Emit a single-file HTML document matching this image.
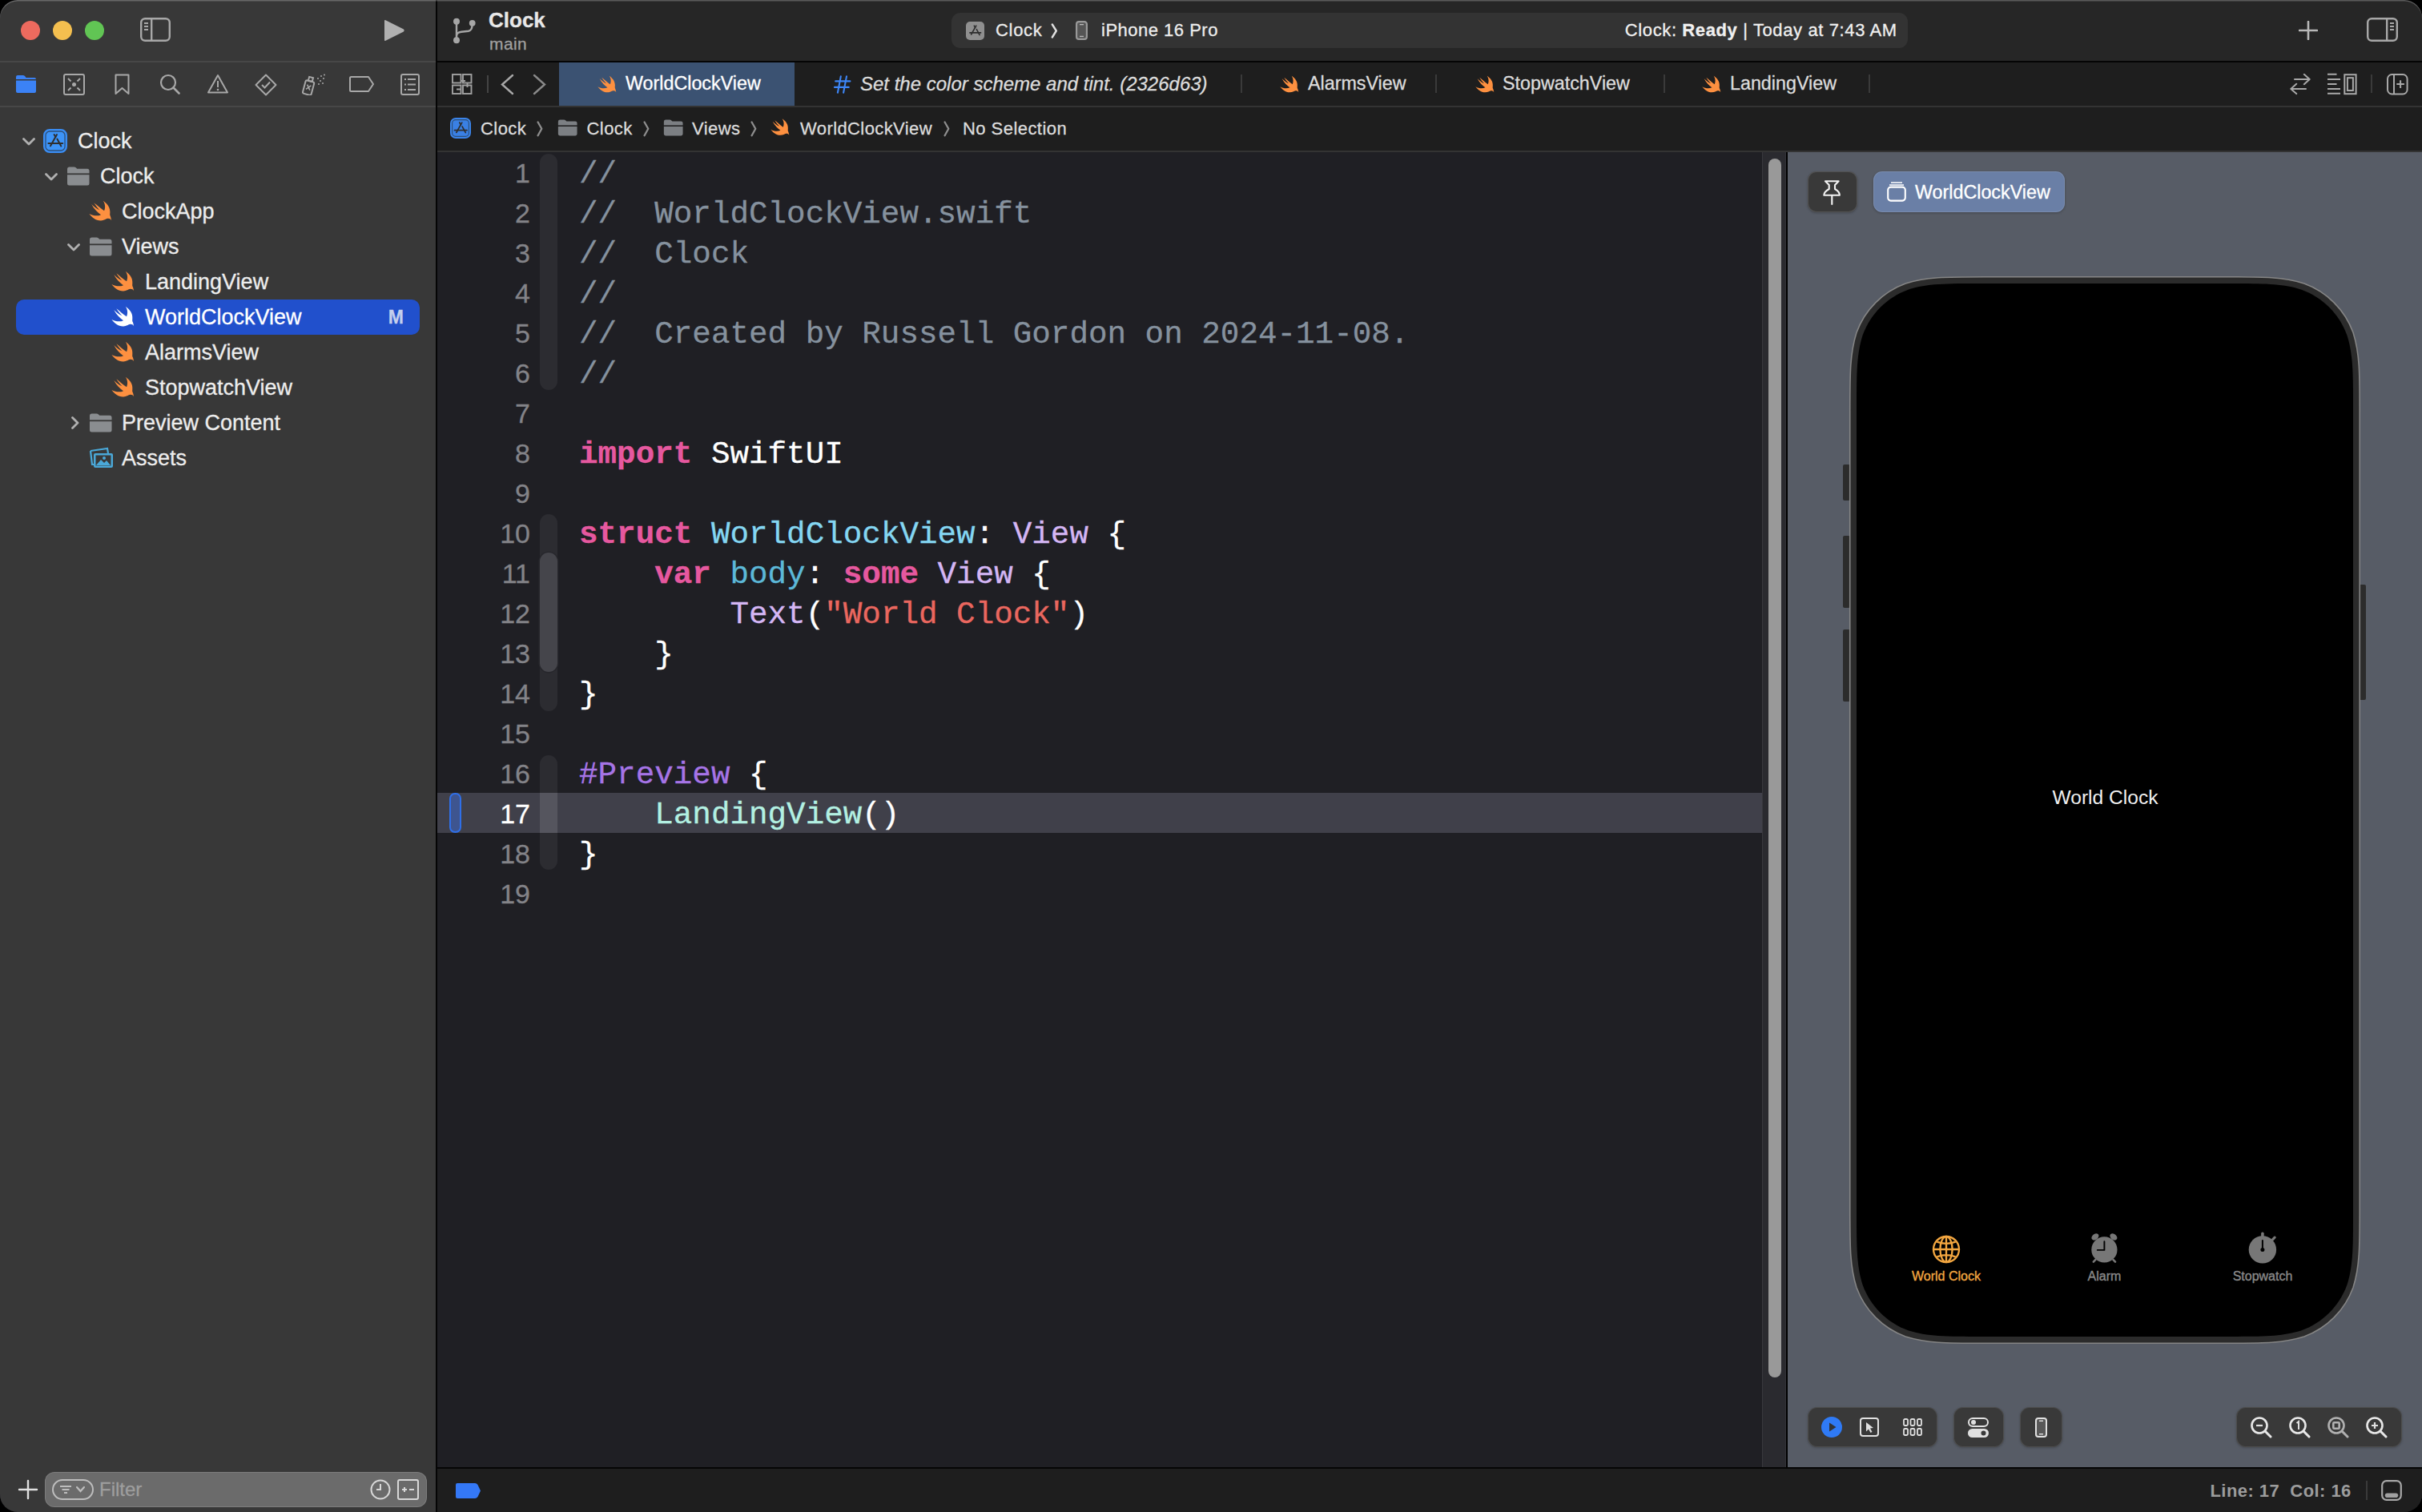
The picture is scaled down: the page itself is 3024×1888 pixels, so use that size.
<!DOCTYPE html><html><head><meta charset="utf-8"><style>
html,body{margin:0;padding:0;background:#000;width:3024px;height:1888px;overflow:hidden;}
.win{position:absolute;left:0;top:0;width:3024px;height:1888px;border-radius:22px;overflow:hidden;background:#1f1f24;}
.t{position:absolute;white-space:pre;line-height:1;-webkit-text-stroke-width:0.3px;}
.r{position:absolute;display:block;}
</style></head><body><div class="win">
<div class="r" style="left:0px;top:0px;width:544px;height:1888px;background:#383838;"></div>
<div class="r" style="left:544px;top:0px;width:2px;height:1888px;background:#050505;"></div>
<div class="r" style="left:0px;top:76px;width:544px;height:2px;background:#474747;"></div>
<div class="r" style="left:0px;top:132px;width:544px;height:2px;background:#474747;"></div>
<div class="r" style="left:26px;top:26px;width:24px;height:24px;background:#ed6a5e;border-radius:50%;"></div>
<div class="r" style="left:66px;top:26px;width:24px;height:24px;background:#f4bf4f;border-radius:50%;"></div>
<div class="r" style="left:106px;top:26px;width:24px;height:24px;background:#61c554;border-radius:50%;"></div>
<svg class="r" style="left:175px;top:22px;" width="38" height="30" viewBox="0 0 38 30"><rect x="1.2" y="1.2" width="35.6" height="27.6" rx="5" fill="none" stroke="#a8a8a8" stroke-width="2.4"/><rect x="13" y="1.2" width="2.4" height="27.6" fill="#a8a8a8"/><g fill="#a8a8a8"><rect x="5" y="6" width="5" height="2"/><rect x="5" y="10" width="5" height="2"/><rect x="5" y="14" width="5" height="2"/></g></svg>
<svg class="r" style="left:478px;top:24px;" width="28" height="28" viewBox="0 0 28 28"><path d="M2,2 Q2,0.5 3.5,1.3 L26,12.5 Q27.5,14 26,15.5 L3.5,26.7 Q2,27.5 2,26 Z" fill="#b0b0b0"/></svg>
<div class="r" style="left:546px;top:0px;width:2478px;height:76px;background:#262626;"></div>
<div class="r" style="left:546px;top:76px;width:2478px;height:2px;background:#050505;"></div>
<svg class="r" style="left:565px;top:22px;" width="30" height="33" viewBox="0 0 30 33"><g fill="#a6a6a6"><circle cx="5" cy="4.8" r="4"/><circle cx="5" cy="28.2" r="4"/><circle cx="24.7" cy="6.8" r="3.9"/></g><path d="M5,5 L5,28 M5,23 Q5,18.5 11,17.8 L20,16.8 Q24.2,16 24.5,10" fill="none" stroke="#a6a6a6" stroke-width="2.4"/></svg>
<div class="t" style="top:11.99px;font-size:26px;color:#e8e8e8;font-family:'Liberation Sans', sans-serif;font-weight:700;left:610.00px;">Clock</div>
<div class="t" style="top:43.92px;font-size:21px;color:#a0a0a0;font-family:'Liberation Sans', sans-serif;letter-spacing:0.4px;left:611.00px;">main</div>
<div class="r" style="left:1188px;top:16px;width:1194px;height:44px;background:#333333;border-radius:11px;"></div>
<svg class="r" style="left:1206px;top:27px;" width="23" height="23" viewBox="0 0 23 23"><rect x="0" y="0" width="23" height="23" rx="5" fill="#8f8f8f"/><g stroke="#2e2e2e" stroke-width="1.6" stroke-linecap="round" fill="none"><path d="M12.8,5.2 L6.6,16"/><path d="M10.3,5.2 L11.6,7.5"/><path d="M13.3,9.7 L17.1,16.6"/><path d="M4.9,13.9 L18.6,13.9"/></g></svg>
<div class="t" style="top:27.17px;font-size:22px;color:#ececec;font-family:'Liberation Sans', sans-serif;letter-spacing:0.7px;left:1243.00px;">Clock</div>
<svg class="r" style="left:1312px;top:29px;" width="9" height="19" viewBox="0 0 9 19"><path d="M1.8,1.5 L6.8,9.5 L1.8,17.5" fill="none" stroke="#e0e0e0" stroke-width="2.4" stroke-linecap="round" stroke-linejoin="round"/></svg>
<svg class="r" style="left:1343px;top:26px;" width="15" height="24" viewBox="0 0 15 24"><rect x="1.1" y="1.1" width="12.8" height="21.8" rx="3" fill="#555" stroke="#999" stroke-width="2.2"/><rect x="5" y="4" width="5" height="1.3" fill="#bbb"/><rect x="5" y="18.8" width="5" height="1.3" fill="#bbb"/></svg>
<div class="t" style="top:27.17px;font-size:22px;color:#ececec;font-family:'Liberation Sans', sans-serif;letter-spacing:0.5px;left:1375.00px;">iPhone 16 Pro</div>
<div class="t" style="top:27.17px;font-size:22px;color:#f0f0f0;font-family:'Liberation Sans', sans-serif;letter-spacing:0.62px;right:655.20px;">Clock: <b>Ready</b> | Today at 7:43 AM</div>
<svg class="r" style="left:2870px;top:26px;" width="24" height="24" viewBox="0 0 24 24"><path d="M12,1 L12,23 M1,12 L23,12" stroke="#b8b8b8" stroke-width="2.6" stroke-linecap="round"/></svg>
<svg class="r" style="left:2955px;top:22px;" width="39" height="30" viewBox="0 0 39 30"><rect x="1.2" y="1.2" width="36.6" height="27.6" rx="5" fill="none" stroke="#a8a8a8" stroke-width="2.4"/><rect x="24" y="1.2" width="2.4" height="27.6" fill="#a8a8a8"/><g fill="#a8a8a8"><rect x="29" y="6" width="5" height="2"/><rect x="29" y="10" width="5" height="2"/><rect x="29" y="14" width="5" height="2"/></g></svg>
<div class="r" style="left:546px;top:78px;width:2478px;height:54px;background:#1e1e1e;"></div>
<div class="r" style="left:546px;top:132px;width:2478px;height:2px;background:#333333;"></div>
<div class="r" style="left:698px;top:78px;width:294px;height:54px;background:#3b5272;"></div>
<svg class="r" style="left:563px;top:92px;" width="27" height="26" viewBox="0 0 27 26"><g fill="none" stroke="#a0a0a0" stroke-width="1.9"><rect x="2" y="1" width="10.5" height="10.5"/><rect x="15" y="1" width="10.5" height="10.5"/><rect x="2" y="14.5" width="10.5" height="10.5"/><rect x="15" y="14.5" width="10.5" height="10.5"/><path d="M12.5,9 L18,9 M20.5,11.5 L20.5,17 M7,19.5 L13,19.5"/></g></svg>
<div class="r" style="left:608px;top:94px;width:2px;height:22px;background:#444;"></div>
<svg class="r" style="left:624px;top:92px;" width="18" height="27" viewBox="0 0 18 27"><path d="M16,2 L3,13.5 L16,25" fill="none" stroke="#a8a8a8" stroke-width="2.4" stroke-linecap="round"/></svg>
<svg class="r" style="left:665px;top:92px;" width="18" height="27" viewBox="0 0 18 27"><path d="M2,2 L15,13.5 L2,25" fill="none" stroke="#8a8a8a" stroke-width="2.4" stroke-linecap="round"/></svg>
<svg class="r" style="left:746px;top:94px;" width="24" height="22" viewBox="0 0 29.5 26.5"><path d="M18.1,0.8 C23.5,4.5 27.5,9.5 26.8,16.5 C26.5,18.5 26.8,19.5 27.5,21 L28.7,25.7 C27.5,24 26,23.2 24,23.3 C21.5,23.6 19.5,26 15,25.9 C8.5,25.8 3.5,21.5 0.4,17.2 C5.5,20 11,20.5 15.3,18.5 C11,15.5 6.5,11 3.3,5.0 C6.5,8 10,11 13.6,12.4 C11,10 8.5,6.5 6.5,3.2 C10.5,6.5 15,10.5 19.4,13.5 C21,10 21,5 18.1,0.8 Z" fill="#fd9040"/></svg>
<div class="t" style="top:93.27px;font-size:23.3px;color:#ffffff;font-family:'Liberation Sans', sans-serif;left:781.00px;">WorldClockView</div>
<svg class="r" style="left:1040px;top:93px;" width="24" height="26" viewBox="0 0 24 26"><path d="M9.8,2.4 L5.9,22.7 M17,2.4 L13.1,22.7 M3.2,8.4 L21.4,8.4 M2,15.9 L19.7,15.9" stroke="#3d86f7" stroke-width="2.1" stroke-linecap="round"/></svg>
<div class="t" style="top:92.68px;font-size:24px;color:#dcdcdc;font-family:'Liberation Sans', sans-serif;font-style:italic;left:1074.00px;">Set the color scheme and tint. (2326d63)</div>
<div class="r" style="left:1549px;top:93px;width:2px;height:23px;background:#3a3a3a;"></div>
<div class="r" style="left:1792px;top:93px;width:2px;height:23px;background:#3a3a3a;"></div>
<div class="r" style="left:2077px;top:93px;width:2px;height:23px;background:#3a3a3a;"></div>
<div class="r" style="left:2333px;top:93px;width:2px;height:23px;background:#3a3a3a;"></div>
<svg class="r" style="left:1598px;top:94px;" width="24" height="22" viewBox="0 0 29.5 26.5"><path d="M18.1,0.8 C23.5,4.5 27.5,9.5 26.8,16.5 C26.5,18.5 26.8,19.5 27.5,21 L28.7,25.7 C27.5,24 26,23.2 24,23.3 C21.5,23.6 19.5,26 15,25.9 C8.5,25.8 3.5,21.5 0.4,17.2 C5.5,20 11,20.5 15.3,18.5 C11,15.5 6.5,11 3.3,5.0 C6.5,8 10,11 13.6,12.4 C11,10 8.5,6.5 6.5,3.2 C10.5,6.5 15,10.5 19.4,13.5 C21,10 21,5 18.1,0.8 Z" fill="#fd9040"/></svg>
<div class="t" style="top:93.27px;font-size:23.3px;color:#dcdcdc;font-family:'Liberation Sans', sans-serif;left:1633.00px;">AlarmsView</div>
<svg class="r" style="left:1842px;top:94px;" width="24" height="22" viewBox="0 0 29.5 26.5"><path d="M18.1,0.8 C23.5,4.5 27.5,9.5 26.8,16.5 C26.5,18.5 26.8,19.5 27.5,21 L28.7,25.7 C27.5,24 26,23.2 24,23.3 C21.5,23.6 19.5,26 15,25.9 C8.5,25.8 3.5,21.5 0.4,17.2 C5.5,20 11,20.5 15.3,18.5 C11,15.5 6.5,11 3.3,5.0 C6.5,8 10,11 13.6,12.4 C11,10 8.5,6.5 6.5,3.2 C10.5,6.5 15,10.5 19.4,13.5 C21,10 21,5 18.1,0.8 Z" fill="#fd9040"/></svg>
<div class="t" style="top:93.27px;font-size:23.3px;color:#dcdcdc;font-family:'Liberation Sans', sans-serif;left:1876.00px;">StopwatchView</div>
<svg class="r" style="left:2125px;top:94px;" width="24" height="22" viewBox="0 0 29.5 26.5"><path d="M18.1,0.8 C23.5,4.5 27.5,9.5 26.8,16.5 C26.5,18.5 26.8,19.5 27.5,21 L28.7,25.7 C27.5,24 26,23.2 24,23.3 C21.5,23.6 19.5,26 15,25.9 C8.5,25.8 3.5,21.5 0.4,17.2 C5.5,20 11,20.5 15.3,18.5 C11,15.5 6.5,11 3.3,5.0 C6.5,8 10,11 13.6,12.4 C11,10 8.5,6.5 6.5,3.2 C10.5,6.5 15,10.5 19.4,13.5 C21,10 21,5 18.1,0.8 Z" fill="#fd9040"/></svg>
<div class="t" style="top:93.27px;font-size:23.3px;color:#dcdcdc;font-family:'Liberation Sans', sans-serif;left:2160.00px;">LandingView</div>
<svg class="r" style="left:2859px;top:92px;" width="27" height="27" viewBox="0 0 27 27"><g fill="none" stroke="#a8a8a8" stroke-width="2" stroke-linecap="round" stroke-linejoin="round"><path d="M6,7 L24.7,7 M17.8,0.8 L24.7,7 L17.8,13.2"/><path d="M1.3,18.9 L20,18.9 M8.2,12.7 L1.3,18.9 L8.2,25.1"/></g></svg>
<svg class="r" style="left:2905px;top:91px;" width="38" height="28" viewBox="0 0 38 28"><g stroke="#a8a8a8" stroke-width="2"><path d="M1,1.8 L12.5,1.8 M1,8 L17,8 M1,13.9 L12.5,13.9 M1,19.9 L17,19.9 M1,25.7 L17,25.7"/></g><rect x="22.3" y="2.2" width="14.3" height="24" fill="none" stroke="#a8a8a8" stroke-width="2"/><rect x="25.9" y="6.2" width="7" height="15.8" fill="none" stroke="#a8a8a8" stroke-width="2"/></svg>
<div class="r" style="left:2960px;top:93px;width:2px;height:23px;background:#3a3a3a;"></div>
<svg class="r" style="left:2980px;top:92px;" width="27" height="27" viewBox="0 0 27 27"><rect x="1" y="1" width="24.6" height="24.5" rx="5.5" fill="none" stroke="#a8a8a8" stroke-width="2"/><rect x="8" y="1" width="2" height="24.5" fill="#a8a8a8"/><path d="M17.1,8.3 L17.1,17.9 M12.3,13.1 L21.9,13.1" stroke="#a8a8a8" stroke-width="2"/></svg>
<div class="r" style="left:546px;top:134px;width:2478px;height:54px;background:#1e1e1e;"></div>
<div class="r" style="left:546px;top:188px;width:2478px;height:2px;background:#333333;"></div>
<svg class="r" style="left:562px;top:147px;" width="26" height="26" viewBox="0 0 26 26"><g transform="scale(0.8666666666666667)"><rect x="1.1" y="1.1" width="27.8" height="27.8" rx="7" fill="#3a80e4" stroke="#3b84ea" stroke-width="2.2"/><rect x="3" y="3" width="24" height="24" rx="5" fill="none" stroke="#2d4f78" stroke-width="1.3"/><g stroke="#2f2f2f" stroke-width="2" stroke-linecap="round" fill="none"><path d="M17,7 L9,21.3"/><path d="M13.6,7 L15.4,10"/><path d="M17.4,12.6 L22.3,21.4"/><path d="M6.4,18.1 L24.2,18.1"/></g></g></svg>
<div class="t" style="top:150.07px;font-size:22px;color:#dcdcdc;font-family:'Liberation Sans', sans-serif;letter-spacing:0.45px;left:600.00px;">Clock</div>
<svg class="r" style="left:670px;top:151px;" width="8" height="20" viewBox="0 0 8 20"><path d="M1.6,1.5 L6.3,9.8 L1.6,18.2" fill="none" stroke="#8e8e8e" stroke-width="2.3" stroke-linecap="round" stroke-linejoin="round"/></svg>
<svg class="r" style="left:803px;top:151px;" width="8" height="20" viewBox="0 0 8 20"><path d="M1.6,1.5 L6.3,9.8 L1.6,18.2" fill="none" stroke="#8e8e8e" stroke-width="2.3" stroke-linecap="round" stroke-linejoin="round"/></svg>
<svg class="r" style="left:937px;top:151px;" width="8" height="20" viewBox="0 0 8 20"><path d="M1.6,1.5 L6.3,9.8 L1.6,18.2" fill="none" stroke="#8e8e8e" stroke-width="2.3" stroke-linecap="round" stroke-linejoin="round"/></svg>
<svg class="r" style="left:1178px;top:151px;" width="8" height="20" viewBox="0 0 8 20"><path d="M1.6,1.5 L6.3,9.8 L1.6,18.2" fill="none" stroke="#8e8e8e" stroke-width="2.3" stroke-linecap="round" stroke-linejoin="round"/></svg>
<svg class="r" style="left:696px;top:149px;" width="25" height="21" viewBox="0 0 29 24"><path d="M1,3.2 Q1,0.5 3.7,0.5 L9.5,0.5 Q11,0.5 12,1.5 L13.2,2.8 L26,2.8 Q28.5,2.8 28.5,5.3 L28.5,21 Q28.5,23.5 26,23.5 L3.5,23.5 Q1,23.5 1,21 Z" fill="#7c7f83"/><rect x="0" y="8.4" width="29" height="1.8" fill="#1e1e1e"/></svg>
<div class="t" style="top:150.07px;font-size:22px;color:#dcdcdc;font-family:'Liberation Sans', sans-serif;letter-spacing:0.45px;left:732.50px;">Clock</div>
<svg class="r" style="left:828px;top:149px;" width="25" height="21" viewBox="0 0 29 24"><path d="M1,3.2 Q1,0.5 3.7,0.5 L9.5,0.5 Q11,0.5 12,1.5 L13.2,2.8 L26,2.8 Q28.5,2.8 28.5,5.3 L28.5,21 Q28.5,23.5 26,23.5 L3.5,23.5 Q1,23.5 1,21 Z" fill="#7c7f83"/><rect x="0" y="8.4" width="29" height="1.8" fill="#1e1e1e"/></svg>
<div class="t" style="top:150.07px;font-size:22px;color:#dcdcdc;font-family:'Liberation Sans', sans-serif;letter-spacing:0.45px;left:864.00px;">Views</div>
<svg class="r" style="left:962px;top:147px;" width="24" height="23" viewBox="0 0 29.5 26.5"><path d="M18.1,0.8 C23.5,4.5 27.5,9.5 26.8,16.5 C26.5,18.5 26.8,19.5 27.5,21 L28.7,25.7 C27.5,24 26,23.2 24,23.3 C21.5,23.6 19.5,26 15,25.9 C8.5,25.8 3.5,21.5 0.4,17.2 C5.5,20 11,20.5 15.3,18.5 C11,15.5 6.5,11 3.3,5.0 C6.5,8 10,11 13.6,12.4 C11,10 8.5,6.5 6.5,3.2 C10.5,6.5 15,10.5 19.4,13.5 C21,10 21,5 18.1,0.8 Z" fill="#fd9040"/></svg>
<div class="t" style="top:150.07px;font-size:22px;color:#dcdcdc;font-family:'Liberation Sans', sans-serif;letter-spacing:0.4px;left:999.00px;">WorldClockView</div>
<div class="t" style="top:150.07px;font-size:22px;color:#dcdcdc;font-family:'Liberation Sans', sans-serif;letter-spacing:0.45px;left:1202.00px;">No Selection</div>
<svg class="r" style="left:19px;top:93px;" width="27" height="23" viewBox="0 0 27 23"><path d="M1,3 Q1,1 3,1 L10,1 Q11.5,1 12.5,2.5 L13.5,4 L24,4 Q26,4 26,6 L26,21 Q26,23 24,23 L3,23 Q1,23 1,21 Z" fill="#3b82f6"/><rect x="1" y="6" width="25" height="1.5" fill="#383838"/></svg>
<svg class="r" style="left:79px;top:92px;" width="27" height="27" viewBox="0 0 27 27"><rect x="1" y="1" width="25" height="25" rx="2" fill="none" stroke="#a8a8a8" stroke-width="2"/><circle cx="13.5" cy="13.5" r="2.5" fill="#a8a8a8"/><path d="M6,6 L9.5,9.5 M21,6 L17.5,9.5 M6,21 L9.5,17.5 M21,21 L17.5,17.5" stroke="#a8a8a8" stroke-width="2"/></svg>
<svg class="r" style="left:143px;top:92px;" width="19" height="27" viewBox="0 0 19 27"><path d="M1.5,1.5 L17.5,1.5 L17.5,25 L9.5,18 L1.5,25 Z" fill="none" stroke="#a8a8a8" stroke-width="2" stroke-linejoin="round"/></svg>
<svg class="r" style="left:199px;top:92px;" width="26" height="26" viewBox="0 0 26 26"><circle cx="11" cy="11" r="9" fill="none" stroke="#a8a8a8" stroke-width="2.2"/><path d="M17.5,17.5 L24.5,24.5" stroke="#a8a8a8" stroke-width="2.6" stroke-linecap="round"/></svg>
<svg class="r" style="left:259px;top:92px;" width="26" height="25" viewBox="0 0 26 25"><path d="M13,2 L25,23.5 L1,23.5 Z" fill="none" stroke="#a8a8a8" stroke-width="2" stroke-linejoin="round"/><rect x="12" y="9" width="2" height="8" fill="#a8a8a8"/><circle cx="13" cy="20" r="1.3" fill="#a8a8a8"/></svg>
<svg class="r" style="left:318px;top:92px;" width="28" height="28" viewBox="0 0 28 28"><path d="M14,1.5 L26.5,14 L14,26.5 L1.5,14 Z" fill="none" stroke="#a8a8a8" stroke-width="2" stroke-linejoin="round"/><path d="M9,14 L12.5,17.5 L19,10.5" fill="none" stroke="#a8a8a8" stroke-width="2"/></svg>
<svg class="r" style="left:377px;top:92px;" width="31" height="27" viewBox="0 0 31 27"><g transform="rotate(15 8 16)"><rect x="3" y="9" width="11" height="17" rx="2" fill="none" stroke="#a8a8a8" stroke-width="2"/><rect x="6" y="4" width="5" height="5" fill="none" stroke="#a8a8a8" stroke-width="2"/><path d="M6,14 L11,20 M11,14 L6,20" stroke="#a8a8a8" stroke-width="1.6"/></g><g fill="#a8a8a8"><circle cx="20" cy="6" r="1"/><circle cx="24" cy="3" r="1"/><circle cx="23" cy="9" r="1"/><circle cx="27" cy="6" r="1"/><circle cx="26" cy="12" r="1"/><circle cx="21" cy="13" r="1"/><circle cx="28" cy="1.5" r="1"/></g></svg>
<svg class="r" style="left:436px;top:95px;" width="31" height="20" viewBox="0 0 31 20"><path d="M2.5,1 L24,1 L30,10 L24,19 L2.5,19 Q1,19 1,17.5 L1,2.5 Q1,1 2.5,1 Z" fill="none" stroke="#a8a8a8" stroke-width="2" stroke-linejoin="round"/></svg>
<svg class="r" style="left:500px;top:92px;" width="24" height="27" viewBox="0 0 24 27"><rect x="1" y="1" width="22" height="25" rx="2" fill="none" stroke="#a8a8a8" stroke-width="2"/><g fill="#a8a8a8"><rect x="5" y="6" width="2" height="2"/><rect x="9" y="6" width="10" height="2"/><rect x="5" y="12.5" width="2" height="2"/><rect x="9" y="12.5" width="10" height="2"/><rect x="5" y="19" width="2" height="2"/><rect x="9" y="19" width="10" height="2"/></g></svg>
<div class="r" style="left:20px;top:374px;width:504px;height:44px;background:#2150cc;border-radius:10px;"></div>
<svg class="r" style="left:28px;top:172px;" width="16" height="10" viewBox="0 0 16 10"><path d="M1.5,1.5 L8,8 L14.5,1.5" fill="none" stroke="#b0b0b0" stroke-width="2.8" stroke-linecap="round" stroke-linejoin="round"/></svg>
<svg class="r" style="left:54px;top:161px;" width="30" height="30" viewBox="0 0 30 30"><g transform="scale(1.0)"><rect x="1.1" y="1.1" width="27.8" height="27.8" rx="7" fill="#3d94f8" stroke="#3a8ef6" stroke-width="2.2"/><rect x="3" y="3" width="24" height="24" rx="5" fill="none" stroke="#2d4f78" stroke-width="1.3"/><g stroke="#2f2f2f" stroke-width="2" stroke-linecap="round" fill="none"><path d="M17,7 L9,21.3"/><path d="M13.6,7 L15.4,10"/><path d="M17.4,12.6 L22.3,21.4"/><path d="M6.4,18.1 L24.2,18.1"/></g></g></svg>
<div class="t" style="top:162.64px;font-size:27px;color:#ededed;font-family:'Liberation Sans', sans-serif;left:97.00px;">Clock</div>
<svg class="r" style="left:56px;top:216px;" width="16" height="10" viewBox="0 0 16 10"><path d="M1.5,1.5 L8,8 L14.5,1.5" fill="none" stroke="#b0b0b0" stroke-width="2.8" stroke-linecap="round" stroke-linejoin="round"/></svg>
<svg class="r" style="left:83px;top:208px;" width="29" height="24" viewBox="0 0 29 24"><path d="M1,3.2 Q1,0.5 3.7,0.5 L9.5,0.5 Q11,0.5 12,1.5 L13.2,2.8 L26,2.8 Q28.5,2.8 28.5,5.3 L28.5,21 Q28.5,23.5 26,23.5 L3.5,23.5 Q1,23.5 1,21 Z" fill="#8a8d90"/><rect x="0" y="8.4" width="29" height="1.8" fill="#383838"/></svg>
<div class="t" style="top:206.64px;font-size:27px;color:#ededed;font-family:'Liberation Sans', sans-serif;left:125.00px;">Clock</div>
<svg class="r" style="left:111px;top:250px;" width="29" height="26" viewBox="0 0 29.5 26.5"><path d="M18.1,0.8 C23.5,4.5 27.5,9.5 26.8,16.5 C26.5,18.5 26.8,19.5 27.5,21 L28.7,25.7 C27.5,24 26,23.2 24,23.3 C21.5,23.6 19.5,26 15,25.9 C8.5,25.8 3.5,21.5 0.4,17.2 C5.5,20 11,20.5 15.3,18.5 C11,15.5 6.5,11 3.3,5.0 C6.5,8 10,11 13.6,12.4 C11,10 8.5,6.5 6.5,3.2 C10.5,6.5 15,10.5 19.4,13.5 C21,10 21,5 18.1,0.8 Z" fill="#fd9040"/></svg>
<div class="t" style="top:250.64px;font-size:27px;color:#ededed;font-family:'Liberation Sans', sans-serif;left:152.00px;">ClockApp</div>
<svg class="r" style="left:84px;top:304px;" width="16" height="10" viewBox="0 0 16 10"><path d="M1.5,1.5 L8,8 L14.5,1.5" fill="none" stroke="#b0b0b0" stroke-width="2.8" stroke-linecap="round" stroke-linejoin="round"/></svg>
<svg class="r" style="left:111px;top:296px;" width="29" height="24" viewBox="0 0 29 24"><path d="M1,3.2 Q1,0.5 3.7,0.5 L9.5,0.5 Q11,0.5 12,1.5 L13.2,2.8 L26,2.8 Q28.5,2.8 28.5,5.3 L28.5,21 Q28.5,23.5 26,23.5 L3.5,23.5 Q1,23.5 1,21 Z" fill="#8a8d90"/><rect x="0" y="8.4" width="29" height="1.8" fill="#383838"/></svg>
<div class="t" style="top:294.64px;font-size:27px;color:#ededed;font-family:'Liberation Sans', sans-serif;left:152.00px;">Views</div>
<svg class="r" style="left:139px;top:338px;" width="29" height="26" viewBox="0 0 29.5 26.5"><path d="M18.1,0.8 C23.5,4.5 27.5,9.5 26.8,16.5 C26.5,18.5 26.8,19.5 27.5,21 L28.7,25.7 C27.5,24 26,23.2 24,23.3 C21.5,23.6 19.5,26 15,25.9 C8.5,25.8 3.5,21.5 0.4,17.2 C5.5,20 11,20.5 15.3,18.5 C11,15.5 6.5,11 3.3,5.0 C6.5,8 10,11 13.6,12.4 C11,10 8.5,6.5 6.5,3.2 C10.5,6.5 15,10.5 19.4,13.5 C21,10 21,5 18.1,0.8 Z" fill="#fd9040"/></svg>
<div class="t" style="top:338.64px;font-size:27px;color:#ededed;font-family:'Liberation Sans', sans-serif;left:181.00px;">LandingView</div>
<svg class="r" style="left:139px;top:382px;" width="29" height="26" viewBox="0 0 29.5 26.5"><path d="M18.1,0.8 C23.5,4.5 27.5,9.5 26.8,16.5 C26.5,18.5 26.8,19.5 27.5,21 L28.7,25.7 C27.5,24 26,23.2 24,23.3 C21.5,23.6 19.5,26 15,25.9 C8.5,25.8 3.5,21.5 0.4,17.2 C5.5,20 11,20.5 15.3,18.5 C11,15.5 6.5,11 3.3,5.0 C6.5,8 10,11 13.6,12.4 C11,10 8.5,6.5 6.5,3.2 C10.5,6.5 15,10.5 19.4,13.5 C21,10 21,5 18.1,0.8 Z" fill="#ffffff"/></svg>
<div class="t" style="top:382.64px;font-size:27px;color:#ffffff;font-family:'Liberation Sans', sans-serif;left:181.00px;">WorldClockView</div>
<svg class="r" style="left:139px;top:426px;" width="29" height="26" viewBox="0 0 29.5 26.5"><path d="M18.1,0.8 C23.5,4.5 27.5,9.5 26.8,16.5 C26.5,18.5 26.8,19.5 27.5,21 L28.7,25.7 C27.5,24 26,23.2 24,23.3 C21.5,23.6 19.5,26 15,25.9 C8.5,25.8 3.5,21.5 0.4,17.2 C5.5,20 11,20.5 15.3,18.5 C11,15.5 6.5,11 3.3,5.0 C6.5,8 10,11 13.6,12.4 C11,10 8.5,6.5 6.5,3.2 C10.5,6.5 15,10.5 19.4,13.5 C21,10 21,5 18.1,0.8 Z" fill="#fd9040"/></svg>
<div class="t" style="top:426.64px;font-size:27px;color:#ededed;font-family:'Liberation Sans', sans-serif;left:181.00px;">AlarmsView</div>
<svg class="r" style="left:139px;top:470px;" width="29" height="26" viewBox="0 0 29.5 26.5"><path d="M18.1,0.8 C23.5,4.5 27.5,9.5 26.8,16.5 C26.5,18.5 26.8,19.5 27.5,21 L28.7,25.7 C27.5,24 26,23.2 24,23.3 C21.5,23.6 19.5,26 15,25.9 C8.5,25.8 3.5,21.5 0.4,17.2 C5.5,20 11,20.5 15.3,18.5 C11,15.5 6.5,11 3.3,5.0 C6.5,8 10,11 13.6,12.4 C11,10 8.5,6.5 6.5,3.2 C10.5,6.5 15,10.5 19.4,13.5 C21,10 21,5 18.1,0.8 Z" fill="#fd9040"/></svg>
<div class="t" style="top:470.64px;font-size:27px;color:#ededed;font-family:'Liberation Sans', sans-serif;left:181.00px;">StopwatchView</div>
<svg class="r" style="left:89px;top:520px;" width="10" height="16" viewBox="0 0 10 16"><path d="M1.5,1.5 L8,8 L1.5,14.5" fill="none" stroke="#b0b0b0" stroke-width="2.8" stroke-linecap="round" stroke-linejoin="round"/></svg>
<svg class="r" style="left:111px;top:516px;" width="29" height="24" viewBox="0 0 29 24"><path d="M1,3.2 Q1,0.5 3.7,0.5 L9.5,0.5 Q11,0.5 12,1.5 L13.2,2.8 L26,2.8 Q28.5,2.8 28.5,5.3 L28.5,21 Q28.5,23.5 26,23.5 L3.5,23.5 Q1,23.5 1,21 Z" fill="#8a8d90"/><rect x="0" y="8.4" width="29" height="1.8" fill="#383838"/></svg>
<div class="t" style="top:514.64px;font-size:27px;color:#ededed;font-family:'Liberation Sans', sans-serif;left:152.00px;">Preview Content</div>
<svg class="r" style="left:110px;top:558px;" width="33" height="28" viewBox="0 0 33 28"><path d="M3,5 L24,2 L25,8" fill="none" stroke="#4aa8d8" stroke-width="2.2"/><rect x="7" y="8" width="24" height="18" rx="2" fill="#4aa8d8"/><rect x="9.5" y="10.5" width="19" height="13" fill="#383838"/><path d="M10,23 L16,16 L20,20 L23,17 L28,23 Z" fill="#4aa8d8"/><circle cx="20" cy="14" r="2" fill="#4aa8d8"/><path d="M3,5 L5,22 L7,22" fill="none" stroke="#4aa8d8" stroke-width="2.2"/></svg>
<div class="t" style="top:558.64px;font-size:27px;color:#ededed;font-family:'Liberation Sans', sans-serif;left:152.00px;">Assets</div>
<div class="t" style="top:384.83px;font-size:23px;color:#c5cfec;font-family:'Liberation Sans', sans-serif;font-weight:700;right:2520.00px;">M</div>
<svg class="r" style="left:22px;top:1847px;" width="26" height="26" viewBox="0 0 26 26"><path d="M13,2 L13,24 M2,13 L24,13" stroke="#e0e0e0" stroke-width="2.4" stroke-linecap="round"/></svg>
<div class="r" style="left:56px;top:1838px;width:477px;height:44px;background:#6b6b6b;border-radius:12px;box-shadow:inset 0 0 0 1px rgba(255,255,255,0.12);"></div>
<svg class="r" style="left:65px;top:1847px;" width="52" height="26" viewBox="0 0 52 26"><rect x="1" y="1" width="50" height="24" rx="12" fill="none" stroke="#bdbdbd" stroke-width="2"/><g fill="#bdbdbd"><rect x="10" y="8" width="14" height="2"/><rect x="12.5" y="12" width="9" height="2"/><rect x="15" y="16" width="4" height="2"/></g><path d="M31,10 L35.5,15 L40,10" fill="none" stroke="#bdbdbd" stroke-width="2.2" stroke-linecap="round"/></svg>
<div class="t" style="top:1847.68px;font-size:24px;color:#9e9e9e;font-family:'Liberation Sans', sans-serif;left:124.00px;">Filter</div>
<svg class="r" style="left:462px;top:1847px;" width="26" height="26" viewBox="0 0 26 26"><circle cx="13" cy="13" r="11.5" fill="none" stroke="#d8d8d8" stroke-width="2"/><path d="M13,6 L13,13 L8,13" fill="none" stroke="#d8d8d8" stroke-width="2"/></svg>
<svg class="r" style="left:496px;top:1847px;" width="27" height="26" viewBox="0 0 27 26"><rect x="1" y="1" width="25" height="24" rx="2" fill="none" stroke="#d8d8d8" stroke-width="2"/><path d="M6,13 L12,13 M9,10 L9,16 M15,13 L21,13" stroke="#d8d8d8" stroke-width="2"/></svg>
<div class="r" style="left:546px;top:190px;width:1684px;height:1642px;background:#1f1f24;"></div>
<div class="r" style="left:546px;top:990px;width:1684px;height:50px;background:#40404a;"></div>
<div class="r" style="left:561px;top:990px;width:15px;height:50px;background:#3e5590;border:2px solid #2f6fe8;border-radius:7px;box-sizing:border-box;"></div>
<div class="r" style="left:674px;top:192px;width:22px;height:295px;background:#2c2c31;border-radius:11px;"></div>
<div class="r" style="left:674px;top:642px;width:22px;height:246px;background:#2c2c31;border-radius:11px;"></div>
<div class="r" style="left:674px;top:690px;width:22px;height:149px;background:#45454b;border-radius:11px;box-shadow:0 0 0 1.5px #27272c;"></div>
<div class="r" style="left:674px;top:943px;width:22px;height:143px;background:#2c2c31;border-radius:11px;"></div>
<div class="r" style="left:674px;top:990px;width:22px;height:50px;background:#55555e;"></div>
<div class="t" style="top:198.91px;font-size:34px;color:#838388;font-family:'Liberation Sans', sans-serif;right:2362.00px;">1</div>
<div class="t" style="top:197.63px;font-size:39.25px;color:#ffffff;font-family:'Liberation Mono', monospace;left:723.00px;"><span style="color:#85919e;">//</span></div>
<div class="t" style="top:248.91px;font-size:34px;color:#838388;font-family:'Liberation Sans', sans-serif;right:2362.00px;">2</div>
<div class="t" style="top:247.63px;font-size:39.25px;color:#ffffff;font-family:'Liberation Mono', monospace;left:723.00px;"><span style="color:#85919e;">//  WorldClockView.swift</span></div>
<div class="t" style="top:298.91px;font-size:34px;color:#838388;font-family:'Liberation Sans', sans-serif;right:2362.00px;">3</div>
<div class="t" style="top:297.63px;font-size:39.25px;color:#ffffff;font-family:'Liberation Mono', monospace;left:723.00px;"><span style="color:#85919e;">//  Clock</span></div>
<div class="t" style="top:348.91px;font-size:34px;color:#838388;font-family:'Liberation Sans', sans-serif;right:2362.00px;">4</div>
<div class="t" style="top:347.63px;font-size:39.25px;color:#ffffff;font-family:'Liberation Mono', monospace;left:723.00px;"><span style="color:#85919e;">//</span></div>
<div class="t" style="top:398.91px;font-size:34px;color:#838388;font-family:'Liberation Sans', sans-serif;right:2362.00px;">5</div>
<div class="t" style="top:397.63px;font-size:39.25px;color:#ffffff;font-family:'Liberation Mono', monospace;left:723.00px;"><span style="color:#85919e;">//  Created by Russell Gordon on 2024-11-08.</span></div>
<div class="t" style="top:448.91px;font-size:34px;color:#838388;font-family:'Liberation Sans', sans-serif;right:2362.00px;">6</div>
<div class="t" style="top:447.63px;font-size:39.25px;color:#ffffff;font-family:'Liberation Mono', monospace;left:723.00px;"><span style="color:#85919e;">//</span></div>
<div class="t" style="top:498.91px;font-size:34px;color:#838388;font-family:'Liberation Sans', sans-serif;right:2362.00px;">7</div>
<div class="t" style="top:548.91px;font-size:34px;color:#838388;font-family:'Liberation Sans', sans-serif;right:2362.00px;">8</div>
<div class="t" style="top:547.63px;font-size:39.25px;color:#ffffff;font-family:'Liberation Mono', monospace;left:723.00px;"><span style="color:#e6589f;font-weight:700;">import</span><span style="color:#ffffff;"> SwiftUI</span></div>
<div class="t" style="top:598.91px;font-size:34px;color:#838388;font-family:'Liberation Sans', sans-serif;right:2362.00px;">9</div>
<div class="t" style="top:648.91px;font-size:34px;color:#838388;font-family:'Liberation Sans', sans-serif;right:2362.00px;">10</div>
<div class="t" style="top:647.63px;font-size:39.25px;color:#ffffff;font-family:'Liberation Mono', monospace;left:723.00px;"><span style="color:#e6589f;font-weight:700;">struct</span> <span style="color:#84d6f2;">WorldClockView</span><span style="color:#ffffff;">: </span><span style="color:#d4b6f4;">View</span><span style="color:#ffffff;"> {</span></div>
<div class="t" style="top:698.91px;font-size:34px;color:#838388;font-family:'Liberation Sans', sans-serif;right:2362.00px;">11</div>
<div class="t" style="top:697.63px;font-size:39.25px;color:#ffffff;font-family:'Liberation Mono', monospace;left:723.00px;">    <span style="color:#e6589f;font-weight:700;">var</span> <span style="color:#5cb8d8;">body</span><span style="color:#ffffff;">: </span><span style="color:#e6589f;font-weight:700;">some</span> <span style="color:#d4b6f4;">View</span><span style="color:#ffffff;"> {</span></div>
<div class="t" style="top:748.91px;font-size:34px;color:#838388;font-family:'Liberation Sans', sans-serif;right:2362.00px;">12</div>
<div class="t" style="top:747.63px;font-size:39.25px;color:#ffffff;font-family:'Liberation Mono', monospace;left:723.00px;">        <span style="color:#d4b6f4;">Text</span><span style="color:#ffffff;">(</span><span style="color:#ea675f;">"World Clock"</span><span style="color:#ffffff;">)</span></div>
<div class="t" style="top:798.91px;font-size:34px;color:#838388;font-family:'Liberation Sans', sans-serif;right:2362.00px;">13</div>
<div class="t" style="top:797.63px;font-size:39.25px;color:#ffffff;font-family:'Liberation Mono', monospace;left:723.00px;">    <span style="color:#ffffff;">}</span></div>
<div class="t" style="top:848.91px;font-size:34px;color:#838388;font-family:'Liberation Sans', sans-serif;right:2362.00px;">14</div>
<div class="t" style="top:847.63px;font-size:39.25px;color:#ffffff;font-family:'Liberation Mono', monospace;left:723.00px;"><span style="color:#ffffff;">}</span></div>
<div class="t" style="top:898.91px;font-size:34px;color:#838388;font-family:'Liberation Sans', sans-serif;right:2362.00px;">15</div>
<div class="t" style="top:948.91px;font-size:34px;color:#838388;font-family:'Liberation Sans', sans-serif;right:2362.00px;">16</div>
<div class="t" style="top:947.63px;font-size:39.25px;color:#ffffff;font-family:'Liberation Mono', monospace;left:723.00px;"><span style="color:#a674e6;">#Preview</span><span style="color:#ffffff;"> {</span></div>
<div class="t" style="top:998.91px;font-size:34px;color:#ffffff;font-family:'Liberation Sans', sans-serif;right:2362.00px;">17</div>
<div class="t" style="top:997.63px;font-size:39.25px;color:#ffffff;font-family:'Liberation Mono', monospace;left:723.00px;">    <span style="color:#b3f0e2;">LandingView</span><span style="color:#ffffff;">()</span></div>
<div class="t" style="top:1048.91px;font-size:34px;color:#838388;font-family:'Liberation Sans', sans-serif;right:2362.00px;">18</div>
<div class="t" style="top:1047.63px;font-size:39.25px;color:#ffffff;font-family:'Liberation Mono', monospace;left:723.00px;"><span style="color:#ffffff;">}</span></div>
<div class="t" style="top:1098.91px;font-size:34px;color:#838388;font-family:'Liberation Sans', sans-serif;right:2362.00px;">19</div>
<div class="r" style="left:2200px;top:190px;width:30px;height:1642px;background:#2a2a2f;"></div>
<div class="r" style="left:2200px;top:190px;width:1px;height:1642px;background:#38383d;"></div>
<div class="r" style="left:2229px;top:190px;width:1px;height:1642px;background:#333338;"></div>
<div class="r" style="left:2208px;top:198px;width:16px;height:1522px;background:#999999;border-radius:8px;"></div>
<div class="r" style="left:2230px;top:190px;width:2px;height:1642px;background:#000000;"></div>
<div class="r" style="left:2232px;top:190px;width:792px;height:1642px;background:#575c66;"></div>
<div class="r" style="left:2257px;top:214px;width:62px;height:51px;background:#393939;border-radius:11px;box-shadow:inset 0 0 0 1px rgba(255,255,255,0.13), 0 1px 3px rgba(0,0,0,0.25);"></div>
<svg class="r" style="left:2273px;top:224px;" width="30" height="34" viewBox="0 0 30 34"><path d="M6,2.2 L22.6,2.2 L18,7 L18,12 Q24,15.5 23.9,19.8 L4.3,19.8 Q4.3,15.5 10.7,12 L10.7,7 Z M14.3,20 L14.3,31" fill="none" stroke="#f2f2f2" stroke-width="2.1" stroke-linecap="round" stroke-linejoin="round"/></svg>
<div class="r" style="left:2339px;top:214px;width:239px;height:51px;background:#6a7fa6;border-radius:11px;box-shadow:inset 0 0 0 1px rgba(255,255,255,0.1), 0 1px 3px rgba(0,0,0,0.25);"></div>
<svg class="r" style="left:2356px;top:226px;" width="24" height="26" viewBox="0 0 24 26"><rect x="1.2" y="7.6" width="21.6" height="17" rx="3.5" fill="none" stroke="#ffffff" stroke-width="2.1"/><path d="M5,2 L19,2 M3,5 L21,5" stroke="#ffffff" stroke-width="1.6"/></svg>
<div class="t" style="top:229.27px;font-size:23.3px;color:#ffffff;font-family:'Liberation Sans', sans-serif;left:2391.00px;">WorldClockView</div>
<div class="r" style="left:2301px;top:580px;width:9px;height:45px;background:#2c2c2c;border-radius:2px;"></div>
<div class="r" style="left:2301px;top:669px;width:9px;height:90px;background:#2c2c2c;border-radius:2px;"></div>
<div class="r" style="left:2301px;top:786px;width:9px;height:90px;background:#2c2c2c;border-radius:2px;"></div>
<div class="r" style="left:2945px;top:730px;width:9px;height:144px;background:#2c2c2c;border-radius:2px;"></div>
<svg class="r" style="left:2300px;top:336px;" width="656" height="1351" viewBox="0 0 656 1351"><path d="M177.90,9.75 L478.10,9.75 C526.52,9.75 550.73,9.75 576.79,17.99 C605.24,28.35 627.65,50.76 638.01,79.21 C646.25,105.27 646.25,129.48 646.25,177.90 L646.25,1173.10 C646.25,1221.52 646.25,1245.73 638.01,1271.79 C627.65,1300.24 605.24,1322.65 576.79,1333.01 C550.73,1341.25 526.52,1341.25 478.10,1341.25 L177.90,1341.25 C129.48,1341.25 105.27,1341.25 79.21,1333.01 C50.76,1322.65 28.35,1300.24 17.99,1271.79 C9.75,1245.73 9.75,1221.52 9.75,1173.10 L9.75,177.90 C9.75,129.48 9.75,105.27 17.99,79.21 C28.35,50.76 50.76,28.35 79.21,17.99 C105.27,9.75 129.48,9.75 177.90,9.75 Z" fill="#2b2b2b" stroke="#858585" stroke-width="1.6"/><path d="M173.92,18.00 L482.08,18.00 C526.97,18.00 549.42,18.00 573.59,25.64 C599.97,35.24 620.76,56.03 630.36,82.41 C638.00,106.58 638.00,129.03 638.00,173.92 L638.00,1177.08 C638.00,1221.97 638.00,1244.42 630.36,1268.59 C620.76,1294.97 599.97,1315.76 573.59,1325.36 C549.42,1333.00 526.97,1333.00 482.08,1333.00 L173.92,1333.00 C129.03,1333.00 106.58,1333.00 82.41,1325.36 C56.03,1315.76 35.24,1294.97 25.64,1268.59 C18.00,1244.42 18.00,1221.97 18.00,1177.08 L18.00,173.92 C18.00,129.03 18.00,106.58 25.64,82.41 C35.24,56.03 56.03,35.24 82.41,25.64 C106.58,18.00 129.03,18.00 173.92,18.00 Z" fill="#000000"/></svg>
<div class="t" style="top:983.67px;font-size:24.6px;color:#f0f0f0;font-family:'Liberation Sans', sans-serif;left:2128.50px;width:1000px;text-align:center;-webkit-text-stroke-width:0;">World Clock</div>
<svg class="r" style="left:2412px;top:1542px;" width="36" height="36" viewBox="0 0 36 36"><g fill="none" stroke="#f2a640" stroke-width="2.35"><circle cx="18" cy="18" r="16"/><ellipse cx="18" cy="18" rx="7.6" ry="16"/><path d="M2,18 L34,18 M18,2 L18,34 M6.4,8.7 Q18,13 29.6,8.7 M6.4,27.3 Q18,23 29.6,27.3"/></g></svg>
<div class="t" style="top:1585.95px;font-size:16px;color:#f2a640;font-family:'Liberation Sans', sans-serif;left:1930.00px;width:1000px;text-align:center;-webkit-text-stroke:0.35px #f2a640;">World Clock</div>
<svg class="r" style="left:2607px;top:1540px;" width="42" height="40" viewBox="0 0 42 40"><g transform="translate(20.4,20.4)"><circle cx="0" cy="0" r="16.1" fill="#777777"/><ellipse cx="-11.5" cy="-16" rx="5" ry="3.6" transform="rotate(-40 -11.5 -16)" fill="#777777"/><ellipse cx="11.5" cy="-16" rx="5" ry="3.6" transform="rotate(40 11.5 -16)" fill="#777777"/><path d="M-11,12.5 L-13.6,15.2 M11,12.5 L13.6,15.2" stroke="#777777" stroke-width="2.6" stroke-linecap="round"/><path d="M0,-10.2 L0,0.5 L-8.6,0.5" fill="none" stroke="#000" stroke-width="1.9" stroke-linecap="round" stroke-linejoin="round"/></g></svg>
<div class="t" style="top:1585.95px;font-size:16px;color:#8a8a8a;font-family:'Liberation Sans', sans-serif;left:2127.50px;width:1000px;text-align:center;-webkit-text-stroke:0.35px #8a8a8a;">Alarm</div>
<svg class="r" style="left:2804px;top:1536px;" width="42" height="44" viewBox="0 0 42 44"><g transform="translate(20.9,24.4)"><circle cx="0" cy="0" r="17.2" fill="#777777"/><path d="M0,-20.2 L0,-16" stroke="#777777" stroke-width="3.6" stroke-linecap="round"/><path d="M12.6,-12.6 L15.2,-15.2" stroke="#777777" stroke-width="3.2" stroke-linecap="round"/><path d="M0,-11.3 L0,0" stroke="#000" stroke-width="2" stroke-linecap="round"/><circle cx="0" cy="0" r="2.5" fill="#000"/></g></svg>
<div class="t" style="top:1585.95px;font-size:16px;color:#8a8a8a;font-family:'Liberation Sans', sans-serif;left:2325.00px;width:1000px;text-align:center;-webkit-text-stroke:0.35px #8a8a8a;">Stopwatch</div>
<div class="r" style="left:2257px;top:1757px;width:162px;height:50px;background:#393939;border-radius:12px;box-shadow:inset 0 0 0 1px rgba(255,255,255,0.1), 0 1px 3px rgba(0,0,0,0.22);"></div>
<div class="r" style="left:2439px;top:1757px;width:63px;height:50px;background:#393939;border-radius:12px;box-shadow:inset 0 0 0 1px rgba(255,255,255,0.1), 0 1px 3px rgba(0,0,0,0.22);"></div>
<div class="r" style="left:2522px;top:1757px;width:53px;height:50px;background:#393939;border-radius:12px;box-shadow:inset 0 0 0 1px rgba(255,255,255,0.1), 0 1px 3px rgba(0,0,0,0.22);"></div>
<div class="r" style="left:2792px;top:1757px;width:207px;height:50px;background:#393939;border-radius:12px;box-shadow:inset 0 0 0 1px rgba(255,255,255,0.1), 0 1px 3px rgba(0,0,0,0.22);"></div>
<svg class="r" style="left:2274px;top:1769px;" width="26" height="26" viewBox="0 0 26 26"><circle cx="13" cy="13" r="13" fill="#2f7af5"/><path d="M10,7.5 L18.5,13 L10,18.5 Z" fill="#333333"/></svg>
<svg class="r" style="left:2322px;top:1770px;" width="24" height="24" viewBox="0 0 24 24"><rect x="1" y="1" width="22" height="22" rx="3" fill="none" stroke="#e0e0e0" stroke-width="2"/><path d="M8,6 L8,17.5 L11,14.5 L13.5,19 L15.5,18 L13,13.5 L17,13 Z" fill="#e0e0e0"/></svg>
<svg class="r" style="left:2376px;top:1771px;" width="24" height="22" viewBox="0 0 24 22"><g fill="none" stroke="#e0e0e0" stroke-width="1.8"><rect x="1" y="1" width="5" height="8" rx="1.5"/><rect x="9.5" y="1" width="5" height="8" rx="1.5"/><rect x="18" y="1" width="5" height="8" rx="1.5"/><rect x="1" y="13" width="5" height="8" rx="1.5"/><rect x="9.5" y="13" width="5" height="8" rx="1.5"/><rect x="18" y="13" width="5" height="8" rx="1.5"/></g></svg>
<svg class="r" style="left:2457px;top:1770px;" width="26" height="25" viewBox="0 0 26 25"><rect x="1" y="1" width="24" height="10" rx="5" fill="none" stroke="#e0e0e0" stroke-width="2"/><circle cx="7" cy="6" r="3" fill="#e0e0e0"/><rect x="0" y="14" width="26" height="11" rx="5.5" fill="#e0e0e0"/><circle cx="19.5" cy="19.5" r="3" fill="#3a3a3a"/></svg>
<svg class="r" style="left:2541px;top:1770px;" width="15" height="25" viewBox="0 0 15 25"><rect x="1" y="1" width="13" height="23" rx="3" fill="#585858" stroke="#e0e0e0" stroke-width="2"/><rect x="5" y="3.6" width="5" height="1.4" fill="#e0e0e0"/><rect x="5" y="20" width="5" height="1.4" fill="#e0e0e0"/></svg>
<svg class="r" style="left:2810px;top:1769px;" width="27" height="27" viewBox="0 0 27 27"><circle cx="11" cy="11" r="9.5" fill="none" stroke="#e8e8e8" stroke-width="2.6"/><path d="M18,18 L25,25" stroke="#e8e8e8" stroke-width="3" stroke-linecap="round"/><path d="M7,11 L15,11" stroke="#e0e0e0" stroke-width="2.2"/></svg>
<svg class="r" style="left:2858px;top:1769px;" width="27" height="27" viewBox="0 0 27 27"><circle cx="11" cy="11" r="9.5" fill="none" stroke="#e8e8e8" stroke-width="2.6"/><path d="M18,18 L25,25" stroke="#e8e8e8" stroke-width="3" stroke-linecap="round"/><path d="M9.5,8 L12,6 L12,16" fill="none" stroke="#e0e0e0" stroke-width="2"/></svg>
<svg class="r" style="left:2906px;top:1769px;" width="27" height="27" viewBox="0 0 27 27"><circle cx="11" cy="11" r="9.5" fill="none" stroke="#b0b0b0" stroke-width="2.6"/><path d="M18,18 L25,25" stroke="#b0b0b0" stroke-width="3" stroke-linecap="round"/><rect x="7.3" y="7.3" width="7.4" height="7.4" rx="1" fill="none" stroke="#b0b0b0" stroke-width="2.6"/></svg>
<svg class="r" style="left:2954px;top:1769px;" width="27" height="27" viewBox="0 0 27 27"><circle cx="11" cy="11" r="9.5" fill="none" stroke="#e8e8e8" stroke-width="2.6"/><path d="M18,18 L25,25" stroke="#e8e8e8" stroke-width="3" stroke-linecap="round"/><path d="M7,11 L15,11 M11,7 L11,15" stroke="#e0e0e0" stroke-width="2.2"/></svg>
<div class="r" style="left:546px;top:1832px;width:2478px;height:2px;background:#050505;"></div>
<div class="r" style="left:546px;top:1834px;width:2478px;height:54px;background:#1e1e1e;"></div>
<svg class="r" style="left:568px;top:1851px;" width="33" height="21" viewBox="0 0 33 21"><path d="M3,1 L25,1 Q27,1 28.5,3 L32,10.5 L28.5,18 Q27,20 25,20 L3,20 Q1,20 1,18 L1,3 Q1,1 3,1 Z" fill="#3478f6"/></svg>
<div class="t" style="top:1850.57px;font-size:22px;color:#9c9c9c;font-family:'Liberation Sans', sans-serif;font-weight:700;letter-spacing:0.45px;right:88.20px;-webkit-text-stroke-width:0;">Line: 17  Col: 16</div>
<div class="r" style="left:2954px;top:1849px;width:2px;height:24px;background:#3a3a3a;"></div>
<svg class="r" style="left:2973px;top:1848px;" width="26" height="26" viewBox="0 0 26 26"><rect x="1.2" y="1.2" width="23.6" height="23.6" rx="5.5" fill="none" stroke="#a8a8a8" stroke-width="2.2"/><rect x="4.8" y="16.5" width="16.4" height="5.6" rx="2.8" fill="#a0a0a0"/></svg>
<div class="r" style="left:0;top:0;width:3024px;height:1888px;border-radius:22px;box-shadow:inset 0 1.5px 0 rgba(255,255,255,0.24);pointer-events:none;"></div>
</div></body></html>
